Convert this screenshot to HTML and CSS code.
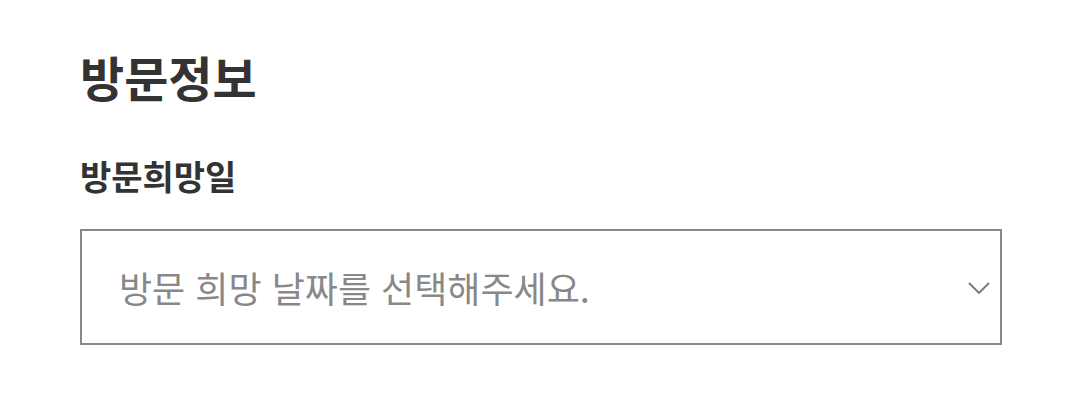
FILE: index.html
```html
<!DOCTYPE html>
<html lang="ko">
<head>
<meta charset="utf-8">
<link rel="stylesheet" href="styles.css">
</head>
<body>
<section class="visit">
  <h2 class="title">방문정보</h2>
  <div class="field">
    <label class="label">방문희망일</label>
    <div class="select">
      <span class="placeholder">방문 희망 날짜를 선택해주세요.</span>
      <svg class="chev" width="22" height="12" viewBox="0 0 22 12"><path d="M1 1 L11 11 L21 1" fill="none" stroke="#777" stroke-width="1.8"/></svg>
    </div>
  </div>
</section>
</body>
</html>
```
FILE: styles.css
```css
html, body { margin: 0; padding: 0; background: #fff; }
body { font-family: "Noto Sans CJK KR", "Noto Sans", sans-serif; color: #333; }
.visit { padding: 40px 78px 0 80px; width: 922px; }
.title { margin: 0; font-size: 48px; font-weight: 700; line-height: 72px; color: #333; letter-spacing: 0; }
.field { margin-top: 40px; display: flex; flex-direction: column; }
.label { font-size: 34px; font-weight: 700; line-height: 48px; color: #333; }
.select { margin-top: 29px; height: 112px; border: 2px solid #888; display: flex; align-items: center; justify-content: space-between; padding: 0 10px 0 37px; }
.placeholder { font-size: 36px; color: #888; font-weight: 400; }
.chev { display: block; margin-top: 2px; }
```
